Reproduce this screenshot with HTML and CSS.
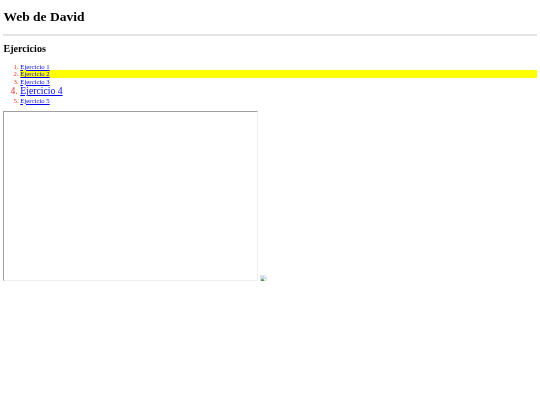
FILE: index.html
```html
<!DOCTYPE html>
<html lang="es">
<head>
<meta charset="utf-8">
<title>Web de David</title>
<link rel="stylesheet" href="styles.css">
</head>
<body>
<h1 class="title">Web de David</h1>
<hr class="rule">
<h2 class="subtitle">Ejercicios</h2>
<ol class="list">
  <li class="item"><a href="#1">Ejercicio 1</a></li>
  <li class="item item-marked"><a href="#2">Ejercicio 2</a></li>
  <li class="item"><a href="#3">Ejercicio 3</a></li>
  <li class="item item-big"><a href="#4">Ejercicio 4</a></li>
  <li class="item"><a href="#5">Ejercicio 5</a></li>
</ol>
<div class="media">
  <div class="frame"></div>
  <svg class="broken" viewBox="0 0 16 16" role="img" aria-label="imagen rota">
    <path d="M1 0.5H10.5L15.5 5.5V15.5H1Z" fill="#fff" stroke="#a9b0b8"/>
    <path d="M2 1.5H10V6H14.5V9L2 11Z" fill="#c3d2ea"/>
    <path d="M2 14.5V12L6 8.5L9 11.5L12 14.5Z" fill="#4f9a45"/>
    <circle cx="5" cy="4.5" r="1.5" fill="#fff"/>
  </svg>
</div>
</body>
</html>
```
FILE: styles.css
```css
html {
  background: #fff;
}
body {
  margin: 0 3.4px;
  font-family: "Liberation Serif", serif;
  color: #000;
  filter: blur(0.3px);
}
.title {
  margin: 8.5px 0 10px;
  font-size: 13.5px;
  line-height: 15.5px;
}
.rule {
  height: 1.5px;
  margin: 0;
  border: 0;
  background: #e4e4e4;
}
.subtitle {
  margin: 7.5px 0 7.5px;
  font-size: 10.125px;
  line-height: 12px;
}
.list {
  margin: 0 0 6.8px;
  padding-left: 16.9px;
  color: #e33;
  font-size: 6.75px;
  line-height: 7.6px;
}
.item a {
  color: #00e;
}
.item-marked {
  background: #ff0;
}
.item-big {
  font-size: 9.7px;
  line-height: 11.3px;
}
.media {
  display: flex;
  align-items: flex-end;
  gap: 1.7px;
}
.frame {
  box-sizing: border-box;
  width: 254.8px;
  height: 170.4px;
  border-style: solid;
  border-width: 1px;
  border-color: #a0a0a0 #eee #eee #a0a0a0;
}
.broken {
  width: 6.75px;
  height: 6.75px;
}
```
